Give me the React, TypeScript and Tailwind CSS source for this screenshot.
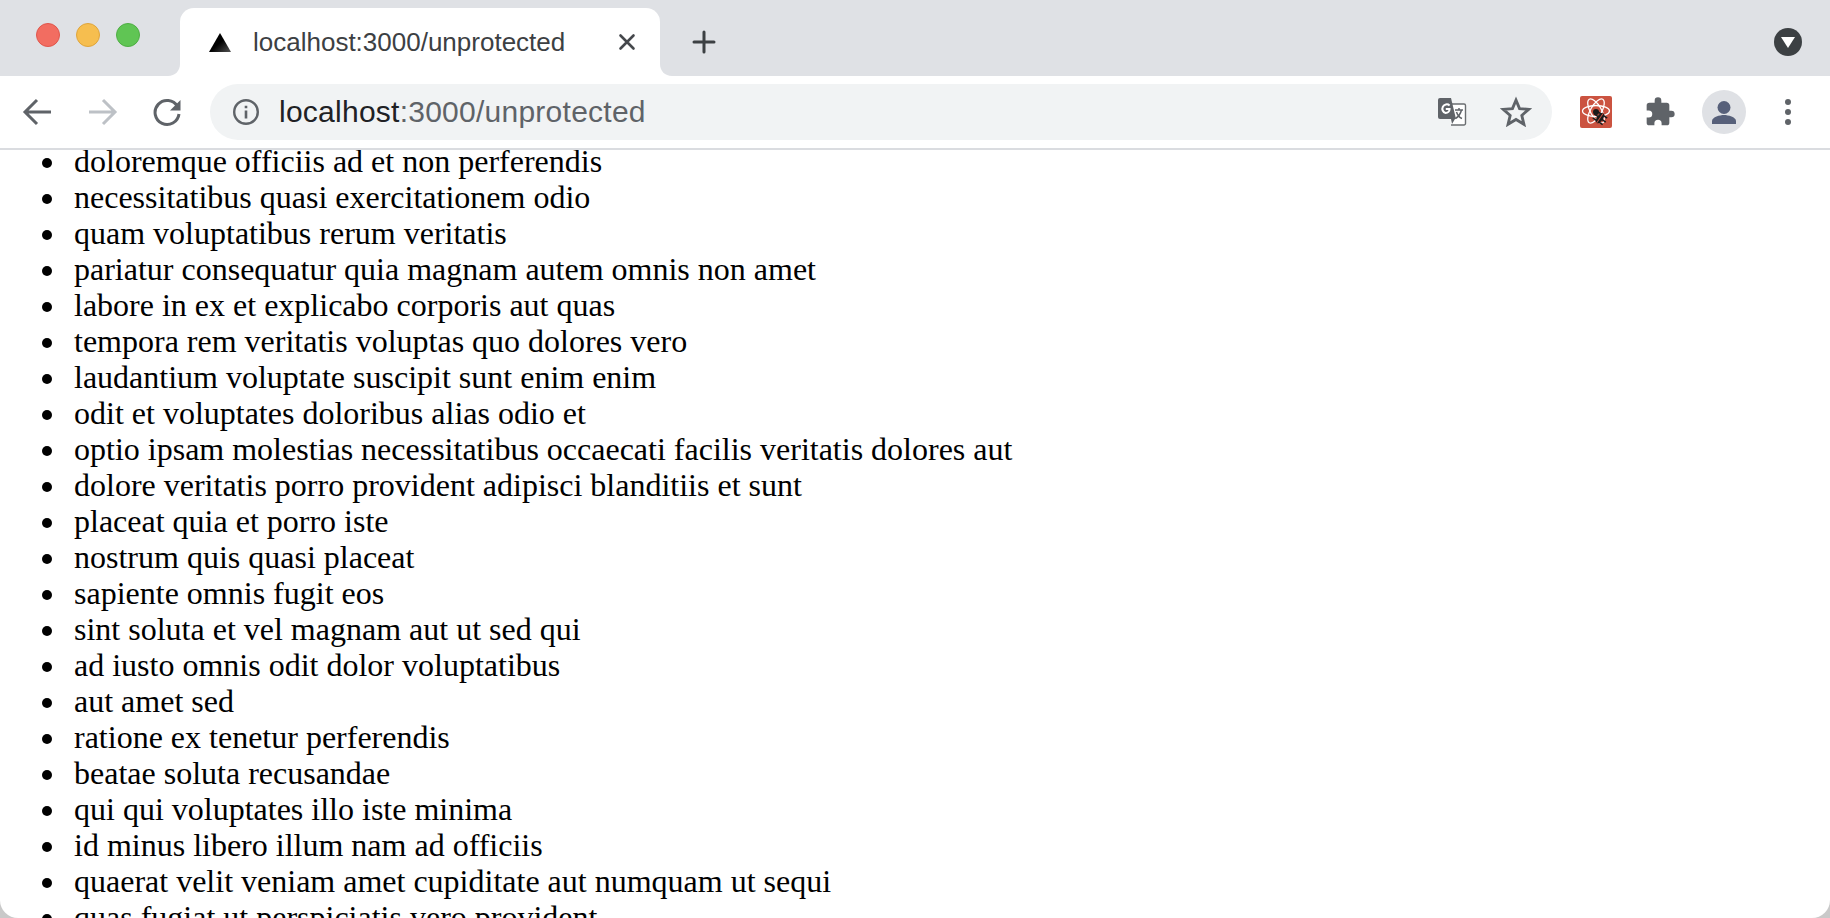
import React from 'react'

const items = [
  'doloremque officiis ad et non perferendis',
  'necessitatibus quasi exercitationem odio',
  'quam voluptatibus rerum veritatis',
  'pariatur consequatur quia magnam autem omnis non amet',
  'labore in ex et explicabo corporis aut quas',
  'tempora rem veritatis voluptas quo dolores vero',
  'laudantium voluptate suscipit sunt enim enim',
  'odit et voluptates doloribus alias odio et',
  'optio ipsam molestias necessitatibus occaecati facilis veritatis dolores aut',
  'dolore veritatis porro provident adipisci blanditiis et sunt',
  'placeat quia et porro iste',
  'nostrum quis quasi placeat',
  'sapiente omnis fugit eos',
  'sint soluta et vel magnam aut ut sed qui',
  'ad iusto omnis odit dolor voluptatibus',
  'aut amet sed',
  'ratione ex tenetur perferendis',
  'beatae soluta recusandae',
  'qui qui voluptates illo iste minima',
  'id minus libero illum nam ad officiis',
  'quaerat velit veniam amet cupiditate aut numquam ut sequi',
  'quas fugiat ut perspiciatis vero provident',
]

function TabStrip() {
  return (
    <div className="flex h-[76px] shrink-0 bg-[#dfe1e5] pt-2">
      <div className="flex w-[180px] shrink-0 items-start gap-4 pl-9 pt-[15px]">
        <span className="h-6 w-6 rounded-full border border-[#e0564c] bg-[#f26d61]" />
        <span className="h-6 w-6 rounded-full border border-[#dfa53c] bg-[#f6be4f]" />
        <span className="h-6 w-6 rounded-full border border-[#4fae44] bg-[#60c554]" />
      </div>

      <div className="relative flex h-[68px] w-[480px] shrink-0 items-center rounded-t-[14px] bg-white pl-[29px] pr-[24px]">
        <svg className="absolute bottom-0 -left-[12px]" width="12" height="12" viewBox="0 0 12 12">
          <path d="M12 0v12H0C7 12 12 7 12 0z" fill="#fff" />
        </svg>
        <svg className="absolute bottom-0 -right-[12px]" width="12" height="12" viewBox="0 0 12 12">
          <path d="M0 0v12h12C5 12 0 7 0 0z" fill="#fff" />
        </svg>
        <svg width="22" height="19" viewBox="0 0 22 19" className="mt-[1px] shrink-0">
          <defs>
            <linearGradient id="tri" x1="0.5" y1="0.5" x2="1" y2="1">
              <stop offset="0" stopColor="#000" />
              <stop offset="1" stopColor="#555" />
            </linearGradient>
          </defs>
          <path d="M11 0l11 19H0z" fill="url(#tri)" />
        </svg>
        <span className="ml-[22px] flex-1 text-[26px] leading-none text-[#3c4043] font-['Liberation_Sans',sans-serif]">
          localhost:3000/unprotected
        </span>
        <svg width="18" height="18" viewBox="0 0 18 18" className="shrink-0" stroke="#45484c" strokeWidth="2.6" strokeLinecap="round">
          <path d="M2.5 2.5l13 13M15.5 2.5l-13 13" />
        </svg>
      </div>

      <div className="flex flex-1 items-center">
        <svg width="24" height="24" viewBox="0 0 24 24" className="ml-8" stroke="#3c4043" strokeWidth="3" strokeLinecap="round">
          <path d="M12 2v20M2 12h20" />
        </svg>
        <div className="ml-auto mr-[28px] flex h-7 w-7 items-center justify-center rounded-full bg-[#3c4043]">
          <svg width="14" height="11" viewBox="0 0 14 11">
            <path d="M0 0h14L7 11z" fill="#fff" />
          </svg>
        </div>
      </div>
    </div>
  )
}

function TranslateIcon() {
  return (
    <svg width="30" height="30" viewBox="0 0 30 30">
      <path d="M12 7h15a1.5 1.5 0 011.5 1.5v18a1.5 1.5 0 01-1.5 1.5H14" fill="#fff" stroke="#6a6d70" strokeWidth="1.4" />
      <path d="M3 1h11l5 21H3a2 2 0 01-2-2V3a2 2 0 012-2z" fill="#5f6368" />
      <path d="M14 22l1 5 3-5z" fill="#5f6368" />
      <path d="M12.6 8.4A4.4 4.4 0 108.6 16a4 4 0 004-4H8.8" fill="none" stroke="#fff" strokeWidth="2" />
      <path d="M18 13h8M22 11v2M24.5 13c-1 4-3.500 7-6 8.500M19.500 15c1 3 3 5.500 5.500 6.500" fill="none" stroke="#5f6368" strokeWidth="1.500" />
    </svg>
  )
}

function ReactBugIcon() {
  return (
    <div className="flex h-8 w-8 items-center justify-center rounded-[2px] bg-[#cb5340]">
      <svg width="32" height="32" viewBox="0 0 32 32" fill="none">
        <g stroke="#fff" strokeWidth="1.300">
          <ellipse cx="16" cy="15" rx="13.500" ry="5.500" />
          <ellipse cx="16" cy="15" rx="13.500" ry="5.500" transform="rotate(60 16 15)" />
          <ellipse cx="16" cy="15" rx="13.500" ry="5.500" transform="rotate(120 16 15)" />
        </g>
        <circle cx="16" cy="16" r="3" fill="#1a1a1a" />
        <g transform="rotate(35 20 22)">
          <ellipse cx="20" cy="22" rx="3" ry="6" fill="#1a1a1a" />
          <path d="M14 18h12M13 22h14M14 26h12" stroke="#1a1a1a" strokeWidth="1.500" />
          <path d="M20 16v12" stroke="#cb5340" strokeWidth="1" />
        </g>
      </svg>
    </div>
  )
}

function Toolbar() {
  return (
    <div className="flex h-[74px] shrink-0 items-center border-b-2 border-[#dadce0] bg-white">
      <div className="flex w-[210px] shrink-0 items-center pl-[22px]">
        <svg width="30" height="28" viewBox="0 0 30 28" fill="none" stroke="#5f6368" strokeWidth="3">
          <path d="M29 14H4M15 2L3 14l12 12" />
        </svg>
        <svg width="30" height="28" viewBox="0 0 30 28" fill="none" stroke="#bdc1c6" strokeWidth="3" className="ml-[36px]">
          <path d="M1 14h25M15 2l12 12-12 12" />
        </svg>
        <svg width="30" height="30" viewBox="0 0 30 30" fill="none" className="ml-[35px]">
          <path d="M24.500 9.500A12 12 0 1026 17" stroke="#5f6368" strokeWidth="3" />
          <path d="M27.500 3v10.500H17z" fill="#5f6368" />
        </svg>
      </div>

      <div className="flex h-14 w-[1342px] shrink-0 items-center rounded-full bg-[#f1f3f4] pl-[22px] pr-[19px]">
        <svg width="28" height="28" viewBox="0 0 28 28" fill="none" className="shrink-0">
          <circle cx="14" cy="14" r="11.800" stroke="#5f6368" strokeWidth="2.400" />
          <path d="M12.700 12.500h2.600v8h-2.600zM12.700 7.700h2.600v2.600h-2.600z" fill="#5f6368" />
        </svg>
        <span className="ml-[19px] flex-1 text-[30px] leading-none tracking-[0.25px] text-[#5f6368] font-['Liberation_Sans',sans-serif]">
          <span className="text-[#202124]">localhost</span>:3000/unprotected
        </span>
        <TranslateIcon />
        <svg width="34" height="34" viewBox="0 0 24 24" fill="none" className="ml-[32px]">
          <path d="M12 3.600l2.500 6 6.500.5-4.900 4.300 1.500 6.300L12 17.300l-5.600 3.400 1.500-6.300L3 10.100l6.500-.5z" stroke="#5f6368" strokeWidth="2" strokeLinejoin="miter" />
        </svg>
      </div>

      <div className="ml-[28px]">
        <ReactBugIcon />
      </div>
      <svg width="32" height="32" viewBox="0 0 24 24" className="ml-[32px]">
        <path d="M20.500 11H19V7a2 2 0 00-2-2h-4V3.500a2.500 2.500 0 00-5 0V5H4a2 2 0 00-2 2v3.800h1.500a2.700 2.700 0 010 5.400H2V20a2 2 0 002 2h3.800v-1.500a2.700 2.700 0 015.400 0V22H17a2 2 0 002-2v-4h1.500a2.500 2.500 0 000-5z" fill="#5f6368" />
      </svg>
      <div className="ml-[26px] flex h-11 w-11 items-center justify-center rounded-full bg-[#dfe1e5]">
        <svg width="28" height="28" viewBox="0 0 28 28">
          <circle cx="14" cy="9.500" r="6.500" fill="#57607a" />
          <path d="M2 26v-3c0-4 8-6 12-6s12 2 12 6v3z" fill="#57607a" />
        </svg>
      </div>
      <div className="ml-[39px] flex flex-col gap-1">
        <span className="h-[6px] w-[6px] rounded-full bg-[#5f6368]" />
        <span className="h-[6px] w-[6px] rounded-full bg-[#5f6368]" />
        <span className="h-[6px] w-[6px] rounded-full bg-[#5f6368]" />
      </div>
    </div>
  )
}

export default function App() {
  return (
    <div className="h-[918px] w-[1830px] overflow-hidden bg-[#c9c9c9]">
      <div className="flex h-full flex-col overflow-hidden rounded-b-[18px] bg-white">
        <TabStrip />
        <Toolbar />
        <main className="flex-1 overflow-hidden">
          <ul className="-mt-[7px] list-none pl-[74px] text-[32px] leading-[36px] text-black font-['Liberation_Serif',serif]">
            {items.map((item) => (
              <li
                key={item}
                className="relative before:absolute before:-left-[32px] before:top-[15px] before:h-[10px] before:w-[10px] before:rounded-full before:bg-black before:content-['']"
              >
                {item}
              </li>
            ))}
          </ul>
        </main>
      </div>
    </div>
  )
}
